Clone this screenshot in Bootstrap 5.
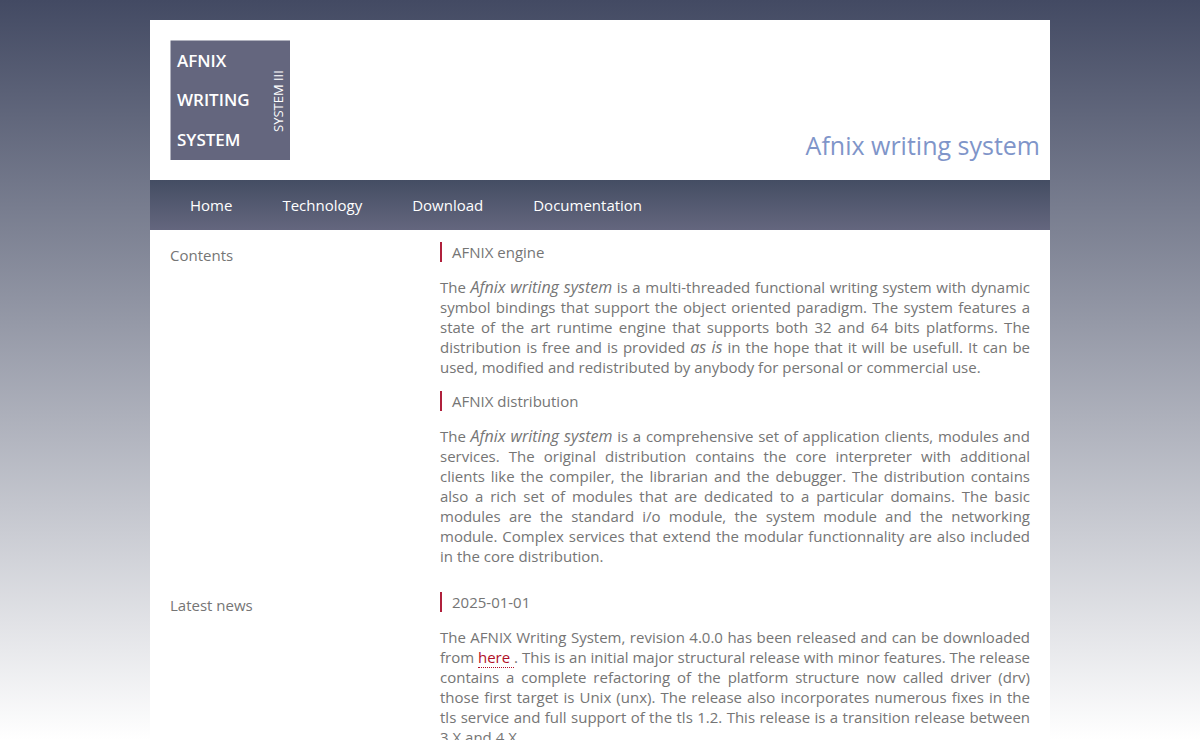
<!DOCTYPE html>
<html lang="en">
<head>
<meta charset="utf-8">
<meta name="viewport" content="width=device-width, initial-scale=1">
<title>Afnix writing system</title>
<link href="https://cdn.jsdelivr.net/npm/bootstrap@5.3.0/dist/css/bootstrap.min.css" rel="stylesheet">
<style>
  body {
    background: linear-gradient(#434a63, #ffffff) fixed;
    color: #757575;
    font: 15px/20px "Open Sans", "Noto Sans", sans-serif;
  }
  .page { max-width: 900px; margin-top: 20px; }
  .masthead { padding: 20px 10px 20px 20px; }
  .logo { width: 120px; height: 120px; }
  .logo text { font-family: "Open Sans", "Noto Sans", sans-serif; fill: #fff; }
  .site-title { color: #7f95c9; font-size: 25px; line-height: 30px; font-weight: 400; }
  .main-nav { background: linear-gradient(#444d63, #64667e); padding: 0 40px; min-height: 50px; column-gap: 50px; }
  .main-nav .nav-link { color: #fff; padding: 0; }
  .section { padding: 0 20px; }
  .section-name { flex: 0 0 270px; font-size: 15px; line-height: 20px; font-weight: 400; margin: 15px 0 0; }
  .topic { border-left: 2px solid #b0203c; padding-left: 10px; font-size: 15px; line-height: 20px; font-weight: 400; margin: 12px 0 15px; }
  .prose { text-align: justify; margin: 0 0 14px; }
  .prose em { font-size: 16px; line-height: 1; }
  .prose a { color: #b00f28; text-decoration: none; border-bottom: 1px dotted #b00f28; }
  @media (max-width: 767px) { .section-name { flex-basis: auto; } }
</style>
</head>
<body>
<div class="page container-fluid bg-white p-0">
  <header class="masthead d-flex justify-content-between align-items-end">
    <svg class="logo" viewBox="0 0 120 120" role="img" aria-label="Afnix writing system, system III">
      <rect x="0.5" y="0.5" width="119.5" height="119.5" fill="#64667e"/>
      <g font-size="17" font-weight="600">
        <text x="7" y="27">AFNIX</text>
        <text x="7" y="66">WRITING</text>
        <text x="7" y="106">SYSTEM</text>
      </g>
      <text font-size="13" transform="translate(113 92) rotate(-90)">SYSTEM III</text>
    </svg>
    <h1 class="site-title m-0">Afnix writing system</h1>
  </header>
  <nav class="main-nav nav align-items-center" aria-label="Main">
    <a class="nav-link" href="#">Home</a>
    <a class="nav-link" href="#">Technology</a>
    <a class="nav-link" href="#">Download</a>
    <a class="nav-link" href="#">Documentation</a>
  </nav>
  <main>
    <section class="section d-md-flex">
      <h2 class="section-name">Contents</h2>
      <div class="flex-fill">
        <h3 class="topic">AFNIX engine</h3>
        <p class="prose">The <em>Afnix writing system</em> is a multi-threaded functional writing system with dynamic symbol bindings that support the object oriented paradigm. The system features a state of the art runtime engine that supports both 32 and 64 bits platforms. The distribution is free and is provided <em>as is</em> in the hope that it will be usefull. It can be used, modified and redistributed by anybody for personal or commercial use.</p>
        <h3 class="topic">AFNIX distribution</h3>
        <p class="prose">The <em>Afnix writing system</em> is a comprehensive set of application clients, modules and services. The original distribution contains the core interpreter with additional clients like the compiler, the librarian and the debugger. The distribution contains also a rich set of modules that are dedicated to a particular domains. The basic modules are the standard i/o module, the system module and the networking module. Complex services that extend the modular functionnality are also included in the core distribution.</p>
      </div>
    </section>
    <section class="section d-md-flex">
      <h2 class="section-name">Latest news</h2>
      <div class="flex-fill">
        <h3 class="topic">2025-01-01</h3>
        <p class="prose">The AFNIX Writing System, revision 4.0.0 has been released and can be downloaded from <a href="#">here </a>. This is an initial major structural release with minor features. The release contains a complete refactoring of the platform structure now called driver (drv) those first target is Unix (unx). The release also incorporates numerous fixes in the tls service and full support of the tls 1.2. This release is a transition release between 3.X and 4.X.</p>
      </div>
    </section>
  </main>
</div>
<script src="https://cdn.jsdelivr.net/npm/bootstrap@5.3.0/dist/js/bootstrap.bundle.min.js"></script>
</body>
</html>
